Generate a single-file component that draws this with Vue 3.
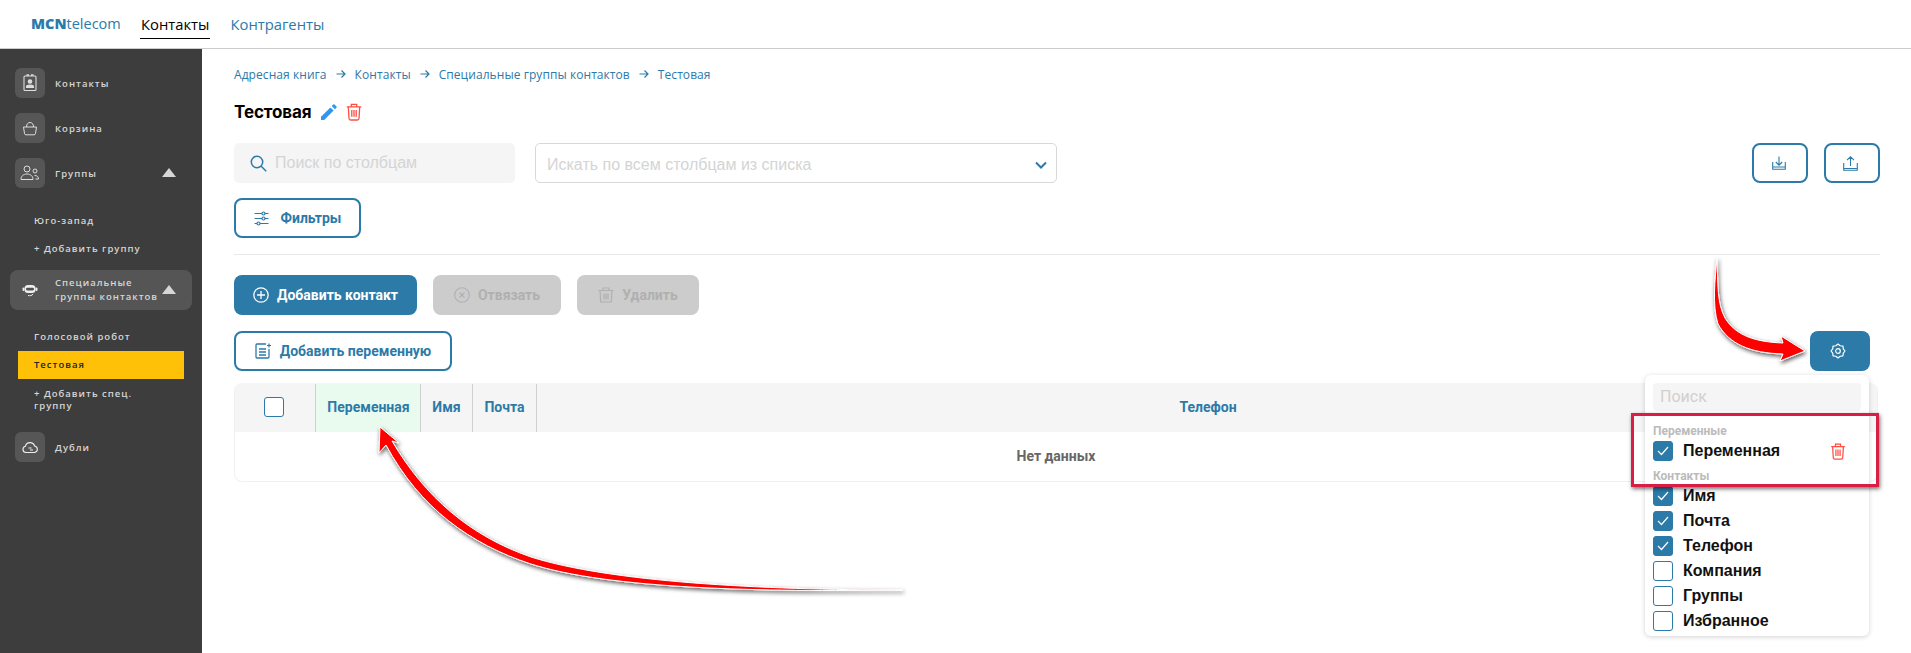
<script setup>
const columns = [
  { label: 'Переменная', width: 105, fresh: true },
  { label: 'Имя', width: 52 },
  { label: 'Почта', width: 64 },
]
const contactFields = [
  { label: 'Имя', on: true },
  { label: 'Почта', on: true },
  { label: 'Телефон', on: true },
  { label: 'Компания', on: false },
  { label: 'Группы', on: false },
  { label: 'Избранное', on: false },
]
</script>

<template>
  <div class="page">
    <header class="topbar">
      <div class="logo"><b>MCN</b>telecom</div>
      <a class="tab active">Контакты</a>
      <a class="tab">Контрагенты</a>
    </header>

    <div class="body-row">
      <aside class="sidebar">
        <div class="nav-item">
          <span class="nav-icon">
            <svg width="18" height="18" viewBox="0 0 18 18" fill="none" stroke="#ddd" stroke-width="1.1"><rect x="3" y="2" width="12" height="14.5" rx="1"/><path d="M6 2V.8h1.5V2M10.500 2V.8H12V2"/><circle cx="9" cy="7.500" r="1.800" fill="#ddd"/><path d="M5.500 13c0-2.500 7-2.500 7 0v.5h-7z" fill="#ddd"/></svg>
          </span>
          <span>Контакты</span>
        </div>
        <div class="nav-item">
          <span class="nav-icon">
            <svg width="18" height="18" viewBox="0 0 18 18" fill="none" stroke="#ddd" stroke-width="1"><path d="M2.500 8h13l-1 6.500a1.500 1.500 0 0 1-1.500 1.300H5a1.500 1.500 0 0 1-1.500-1.300zM5.500 8C5.500 5 7 3.500 9 3.500S12.500 5 12.500 8"/></svg>
          </span>
          <span>Корзина</span>
        </div>
        <div class="nav-item">
          <span class="nav-icon">
            <svg width="20" height="18" viewBox="0 0 20 18" fill="none" stroke="#ddd" stroke-width="1"><circle cx="7" cy="5" r="3"/><path d="M1 15.500c0-3.500 2.500-5.500 6-5.500s6 2 6 5.500z"/><circle cx="15" cy="7" r="2"/><path d="M14.500 11.500c2.500 0 4 1 4 3.500h-3"/></svg>
          </span>
          <span>Группы</span>
          <i class="caret"></i>
        </div>

        <div class="sub-list first">
          <div class="sub-item">Юго-запад</div>
          <div class="sub-item">+ Добавить группу</div>
        </div>

        <div class="nav-item spec">
          <span class="nav-icon plain">
            <svg width="18" height="18" viewBox="0 0 18 18"><rect x="3.500" y="4" width="11" height="8" rx="3.500" fill="#eee"/><rect x="5" y="6.800" width="8" height="2.600" rx="1.300" fill="#4f4f4f"/><rect x="1.500" y="6.500" width="2" height="3.500" rx="1" fill="#eee"/><rect x="14.500" y="6.500" width="2" height="3.500" rx="1" fill="#eee"/><path d="M7 14.500c2 .5 4 .2 5-1.500" stroke="#eee" fill="none"/></svg>
          </span>
          <span class="two-line">Специальные группы контактов</span>
          <i class="caret"></i>
        </div>

        <div class="sub-list second">
          <div class="sub-item">Голосовой робот</div>
          <div class="sub-item current">Тестовая</div>
          <div class="sub-item wrap">+ Добавить спец. группу</div>
        </div>

        <div class="nav-item">
          <span class="nav-icon">
            <svg width="18" height="18" viewBox="0 0 18 18" fill="none" stroke="#eee" stroke-width="1.100"><path d="M5 14.500a3.200 3.200 0 0 1-.6-6.300 4.800 4.800 0 0 1 9.200-.2 3.300 3.300 0 0 1 0 6.500z"/><path d="M7.500 10h3M9 12h3" stroke-width="1"/></svg>
          </span>
          <span>Дубли</span>
        </div>
      </aside>

      <main class="main">
        <nav class="crumbs">
          <template v-for="(c, i) in ['Адресная книга', 'Контакты', 'Специальные группы контактов', 'Тестовая']" :key="c">
            <svg v-if="i" class="crumb-arrow" width="10" height="10" viewBox="0 0 10 10" fill="none" stroke="#2b7aa8" stroke-width="1.200"><path d="M.5 5h8.500M5.500 1.500 9 5 5.500 8.500"/></svg>
            <span>{{ c }}</span>
          </template>
        </nav>

        <div class="title-row">
          <h1>Тестовая</h1>
          <svg width="18" height="18" viewBox="0 0 18 18" fill="#2f96f3"><path d="M1 13.800V17h3.200l9.400-9.400-3.200-3.200zM16.500 4.700a.9.9 0 0 0 0-1.200l-2-2a.9.9 0 0 0-1.200 0l-1.600 1.600 3.200 3.200z"/></svg>
          <svg width="16" height="18" viewBox="0 0 16 18" fill="none" stroke="#ff4d42" stroke-width="1.300"><path d="M.8 3.800h14.400M5.300 3.500V1.300h5.400v2.200M2.300 3.800l.7 11.700a1.600 1.600 0 0 0 1.600 1.500h6.800a1.600 1.600 0 0 0 1.600-1.500l.7-11.700M5.800 7v6.800M8 7v6.800M10.200 7v6.800"/></svg>
        </div>

        <div class="filters">
          <label class="search">
            <svg width="17" height="17" viewBox="0 0 17 17" fill="none" stroke="#2b7aa8" stroke-width="1.500"><circle cx="7" cy="7" r="5.700"/><path d="m11.200 11.200 5 5"/></svg>
            <span>Поиск по столбцам</span>
          </label>
          <div class="select">
            <span>Искать по всем столбцам из списка</span>
            <svg width="12" height="8" viewBox="0 0 12 8" fill="none" stroke="#2b7aa8" stroke-width="2"><path d="m1 1.500 5 5 5-5"/></svg>
          </div>
          <div class="spacer"></div>
          <button class="btn outline square">
            <svg width="14" height="14" viewBox="0 0 14 14" fill="none" stroke="#2b7aa8" stroke-width="1.100"><path d="M.7 6v7.200h12.600V6M7 .5v8.500M3.800 6 7 9.200 10.200 6M.7 11h12.600"/></svg>
          </button>
          <button class="btn outline square">
            <svg width="15" height="15" viewBox="0 0 15 15" fill="none" stroke="#2b7aa8" stroke-width="1.100"><path d="M.7 7v7.300h13.600V7M7.500 10V.8M4 4.200 7.500.8 11 4.200M.7 12.500h13.600"/></svg>
          </button>
        </div>

        <button class="btn outline filter-btn">
          <svg width="15" height="15" viewBox="0 0 15 15" fill="none" stroke="#2b7aa8" stroke-width="1.200"><path d="M.5 2.500h7.500M11 2.500h3.500M.5 7.500h7.500M11 7.500h3.500M.5 12.500h2.500M6 12.500h8.500"/><circle cx="9.500" cy="2.500" r="1.500"/><circle cx="9.500" cy="7.500" r="1.500"/><circle cx="4.500" cy="12.500" r="1.500"/></svg>
          Фильтры
        </button>

        <hr class="divider" />

        <div class="actions">
          <button class="btn primary">
            <svg width="16" height="16" viewBox="0 0 16 16" fill="none" stroke="#fff" stroke-width="1.300"><circle cx="8" cy="8" r="7.200"/><path d="M8 4v8M4 8h8"/></svg>
            Добавить контакт
          </button>
          <button class="btn disabled">
            <svg width="16" height="16" viewBox="0 0 16 16" fill="none" stroke="#b0b0b0" stroke-width="1.100"><circle cx="8" cy="8" r="7.300"/><path d="m5.500 5.500 5 5M10.500 5.500l-5 5"/></svg>
            Отвязать
          </button>
          <button class="btn disabled">
            <svg width="16" height="16" viewBox="0 0 16 16" fill="none" stroke="#b0b0b0" stroke-width="1.200"><path d="M.5 3.500h15M5 3.300V1h6v2.300M2 3.500l.7 11.500h10.600L14 3.500M6 6.500v6M8 6.500v6M10 6.500v6"/></svg>
            Удалить
          </button>
        </div>

        <div class="var-row">
          <button class="btn outline var-btn">
            <svg width="17" height="16" viewBox="0 0 17 16" fill="none" stroke="#2b7aa8" stroke-width="1.300"><path d="M11 1H2a1 1 0 0 0-1 1v12a1 1 0 0 0 1 1h11a1 1 0 0 0 1-1V6M4 6h7M4 9h7M4 12h7"/><path d="M14 .5v4M12 2.500h4" stroke-width="1.200"/></svg>
            Добавить переменную
          </button>
          <button class="btn primary gear">
            <svg width="16" height="16" viewBox="0 0 16 16" fill="none" stroke="#fff" stroke-width="1.200" stroke-linejoin="round"><path d="M15 8 13.270 10.180 12.950 12.950 10.180 13.270 8 15 5.820 13.270 3.050 12.950 2.730 10.180 1 8 2.730 5.820 3.050 3.050 5.820 2.730 8 1 10.180 2.730 12.950 3.050 13.270 5.820z"/><circle cx="8" cy="8" r="2.300"/></svg>
          </button>

          <div class="column-menu">
            <div class="menu-search">Поиск</div>
            <div class="group-label">Переменные</div>
            <div class="menu-item">
              <span class="check on"><svg width="12" height="10" viewBox="0 0 12 10" fill="none" stroke="#fff" stroke-width="1.200"><path d="m1 5 3.500 3.500L11 1"/></svg></span>
              <span class="item-name">Переменная</span>
              <svg class="menu-trash" width="16" height="17" viewBox="0 0 16 18" fill="none" stroke="#ff4d42" stroke-width="1.300"><path d="M.8 3.800h14.400M5.300 3.500V1.300h5.400v2.200M2.300 3.800l.7 11.700a1.600 1.600 0 0 0 1.600 1.500h6.800a1.600 1.600 0 0 0 1.600-1.500l.7-11.700M5.800 7v6.800M8 7v6.800M10.200 7v6.800"/></svg>
            </div>
            <div class="group-label second-label">Контакты</div>
            <div v-for="f in contactFields" :key="f.label" class="menu-item">
              <span class="check" :class="{ on: f.on }">
                <svg v-if="f.on" width="12" height="10" viewBox="0 0 12 10" fill="none" stroke="#fff" stroke-width="1.200"><path d="m1 5 3.500 3.500L11 1"/></svg>
              </span>
              <span class="item-name">{{ f.label }}</span>
            </div>
          </div>
        </div>

        <section class="table">
          <div class="thead">
            <div class="th check-col"><span class="check"></span></div>
            <div v-for="c in columns" :key="c.label" class="th" :class="{ fresh: c.fresh }" :style="{ width: c.width + 'px' }">{{ c.label }}</div>
            <div class="th grow">Телефон</div>
          </div>
          <div class="empty">Нет данных</div>
        </section>
      </main>
    </div>

    <svg class="annot" width="1911" height="653" viewBox="0 0 1911 653">
      <defs>
        <filter id="ds" x="-20%" y="-20%" width="140%" height="140%">
          <feDropShadow dx="1" dy="2" stdDeviation="2" flood-color="#000" flood-opacity=".65"/>
        </filter>
      </defs>
      <g filter="url(#ds)" fill="#f00" stroke="#fff" stroke-width="1">
        <path d="M1717 258C1718 285 1717 303 1725 318C1736 336 1756 342 1783 343L1781 336L1805 351L1780 361L1783 354C1750 353 1729 344 1718 324C1712 305 1715 280 1717 258Z"/>
        <path d="M903 590C760 590 610 582 531 557C470 536 425 497 392 441L399 443L380 427L379 453L386 445C420 508 470 544 531 564C610 589 760 592 903 590Z"/>
      </g>
    </svg>
    <div class="highlight"></div>
  </div>
</template>

<style scoped>
.page {
  position: relative;
  height: 653px;
  overflow: hidden;
  display: flex;
  flex-direction: column;
  font-family: "Open Sans", sans-serif;
  color: #000;
  background: #fff;
}
.topbar {
  height: 48px;
  flex: none;
  border-bottom: 1px solid #ccc;
  display: flex;
  align-items: flex-start;
  padding-left: 31px;
  font-size: 14.800px;
}
.logo {
  color: #2b7aa8;
  font-size: 14.500px;
  line-height: 48px;
  width: 109px;
}
.logo b { font-weight: 800; }
.tab {
  color: #2b7aa8;
  margin-right: 19px;
  height: 39px;
  line-height: 48px;
  padding: 0 1px;
  box-sizing: border-box;
}
.tab.active {
  color: #000;
  border-bottom: 1px solid #000;
}
.body-row { flex: 1; display: flex; min-height: 0; }
.sidebar {
  width: 202px;
  flex: none;
  background: #3d3d3d;
  box-sizing: border-box;
  padding: 19px 10px 0;
  color: #d6d6d6;
  font-size: 9.500px;
  font-weight: 600;
  letter-spacing: 1px;
}
.nav-item {
  display: flex;
  align-items: center;
  height: 30px;
  padding-left: 5px;
  margin-bottom: 15px;
  gap: 10px;
  position: relative;
}
.nav-icon {
  width: 30px;
  height: 30px;
  flex: none;
  background: #565656;
  border-radius: 6px;
  display: flex;
  align-items: center;
  justify-content: center;
}
.nav-icon.plain { background: transparent; }
.caret {
  position: absolute;
  left: 152px;
  top: 10px;
  border-left: 7px solid transparent;
  border-right: 7px solid transparent;
  border-bottom: 9px solid #d6d6d6;
}
.spec {
  height: 40px;
  margin: 0;
  background: #555;
  border-radius: 8px;
}
.spec .caret { top: 15px; }
.two-line { width: 105px; line-height: 14px; }
.sub-list { padding-left: 8px; }
.sub-list.first { margin-top: 19px; margin-bottom: 7px; }
.sub-list.second { margin-top: 13px; margin-bottom: 20px; }
.sub-item {
  width: 166px;
  height: 28px;
  line-height: 28px;
  box-sizing: border-box;
  padding-left: 16px;
  padding-right: 10px;
}
.sub-item.current { background: #ffc107; color: #222; }
.sub-item.wrap { height: auto; line-height: 12px; padding-top: 9px; }
.main {
  flex: 1;
  min-width: 0;
  box-sizing: border-box;
  padding: 16px 31px 0 32px;
}
.crumbs {
  height: 18px;
  display: flex;
  align-items: center;
  font-size: 12px;
  letter-spacing: .07px;
  color: #2b7aa8;
  gap: 9px;
}
.title-row {
  display: flex;
  align-items: center;
  margin-top: 15px;
  height: 28px;
  gap: 8px;
}
h1 {
  margin: 0;
  font: 700 17px Inter, sans-serif;
  letter-spacing: -.1px;
}
.filters { display: flex; margin-top: 17px; height: 40px; }
.search {
  width: 281px;
  background: #f5f5f5;
  border-radius: 5px;
  display: flex;
  align-items: center;
  padding-left: 16px;
  box-sizing: border-box;
  gap: 8px;
  color: #d4d4d4;
  font: 400 16px "Liberation Sans", sans-serif;
}
.select {
  width: 522px;
  margin-left: 20px;
  border: 1px solid #d8d8d8;
  border-radius: 5px;
  box-sizing: border-box;
  display: flex;
  align-items: center;
  justify-content: space-between;
  padding: 4px 9px 0 11px;
  color: #d4d4d4;
  font: 400 16px "Liberation Sans", sans-serif;
}
.spacer { flex: 1; }
.btn {
  height: 40px;
  box-sizing: border-box;
  border-radius: 8px;
  display: inline-flex;
  align-items: center;
  justify-content: center;
  gap: 8px;
  font: 700 14px Roboto, sans-serif;
  padding: 0;
  cursor: pointer;
}
.outline { background: #fff; border: 2px solid #2b7aa8; color: #2b7aa8; }
.square { width: 56px; margin-left: 16px; padding-right: 3px; }
.filter-btn { width: 127px; margin-top: 15px; gap: 12px; display: flex; }
.divider { border: 0; border-top: 1px solid #e8e8e8; margin: 16px 0 20px; }
.actions { display: flex; gap: 16px; }
.primary { background: #2b7aa8; border: 0; color: #fff; }
.actions .primary { width: 183px; }
.disabled { background: #ccc; border: 0; color: #b0b0b0; }
.actions .disabled:nth-child(2) { width: 128px; }
.actions .disabled:nth-child(3) { width: 122px; }
.var-row {
  position: relative;
  display: flex;
  justify-content: space-between;
  margin-top: 16px;
  padding-right: 10px;
}
.var-btn { width: 218px; }
.gear { width: 60px; padding-right: 5px; }
.column-menu {
  position: absolute;
  z-index: 2;
  right: 11px;
  top: 44px;
  width: 224px;
  height: 261px;
  box-sizing: border-box;
  padding: 8px 8px 0;
  background: #fff;
  border-radius: 6px;
  box-shadow: 0 1px 5px rgba(0, 0, 0, .18);
}
.menu-search {
  height: 28px;
  background: #f5f5f5;
  border-radius: 4px;
  padding-left: 7px;
  color: #d0d0d0;
  font: 400 16px/28px Roboto, sans-serif;
}
.group-label {
  font: 700 12px/16px Roboto, sans-serif;
  color: #bbb;
  margin-top: 12px;
  height: 18px;
}
.second-label { margin-top: 0; height: 20px; line-height: 20px; }
.menu-item {
  display: flex;
  align-items: flex-start;
  height: 25px;
  gap: 10px;
  font: 700 16px/20px "Liberation Sans", sans-serif;
  color: #111;
  position: relative;
}
.menu-trash { position: absolute; left: 177px; top: 2px; }
.check {
  width: 20px;
  height: 20px;
  flex: none;
  box-sizing: border-box;
  border: 1px solid #2b7aa8;
  border-radius: 3px;
  background: #fff;
  display: inline-flex;
  align-items: center;
  justify-content: center;
}
.check.on { background: #2b7aa8; }
.table {
  margin-top: 12px;
  margin-right: 2px;
  height: 99px;
  box-sizing: border-box;
  border: 1px solid #f0f0f0;
  border-top: 0;
  border-radius: 8px;
  overflow: hidden;
}
.thead {
  display: flex;
  height: 49px;
  background: #f5f5f5;
  font: 700 14px Roboto, sans-serif;
  color: #2b7aa8;
}
.th {
  box-sizing: border-box;
  display: flex;
  align-items: center;
  justify-content: center;
  border-left: 1.500px solid #d0d0d0;
  margin-top: 1px;
  padding-bottom: 3px;
}
.th.check-col { width: 80px; border-left: 0; padding-right: 2px; }
.th.fresh { background: #e9fbef; padding-left: 1px; }
.th.grow { flex: 1; padding-left: 2px; }
.empty {
  height: 47px;
  display: flex;
  align-items: center;
  justify-content: center;
  font: 700 14px Roboto, sans-serif;
  color: #666;
}
.annot {
  position: absolute;
  left: 0;
  top: 0;
  z-index: 3;
  pointer-events: none;
}
.highlight {
  position: absolute;
  z-index: 4;
  left: 1631px;
  top: 413px;
  width: 248px;
  height: 74px;
  box-sizing: border-box;
  border: 3px solid #d81e44;
  box-shadow: 1px 2px 4px rgba(0, 0, 0, .55);
}
</style>

<style>
html, body { margin: 0; overflow: hidden; background: #fff; }
</style>
